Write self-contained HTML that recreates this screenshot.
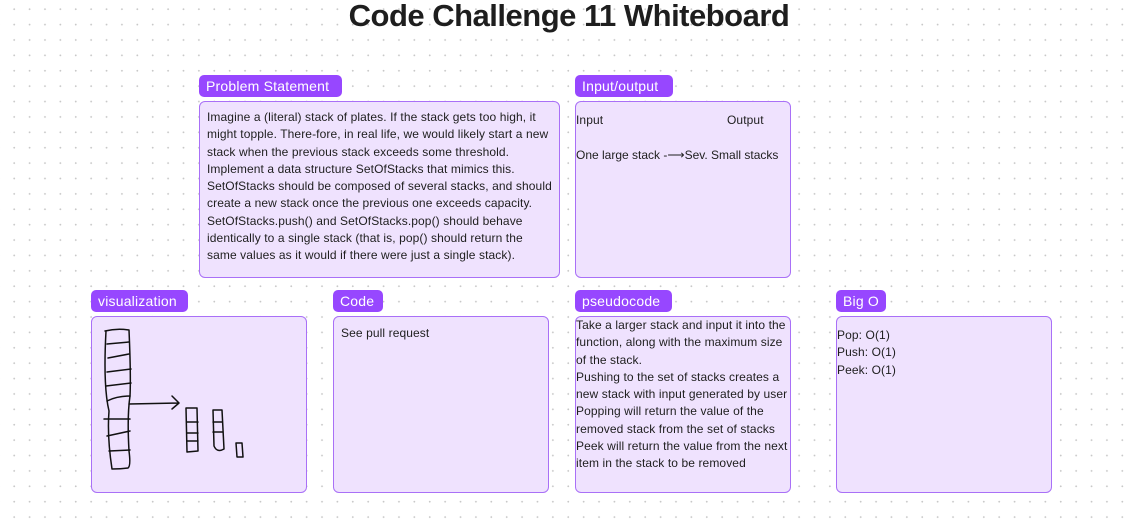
<!DOCTYPE html>
<html><head><meta charset="utf-8"><style>
body{margin:0;width:1129px;height:525px;overflow:hidden;background:#fff;font-family:"Liberation Sans",sans-serif;position:relative;
background-image:radial-gradient(circle,#c8c8c8 0.8px,transparent 1.1px);background-size:15.4px 15.4px;background-position:6.5px 1.5px;}
h1{position:absolute;left:0;width:1138px;top:-2px;margin:0;text-align:center;font-size:31px;font-weight:bold;color:#1e1e1e;letter-spacing:-0.5px}
.lab{position:absolute;height:22px;background:#9747ff;color:#fff;border-radius:5px;font-size:14px;line-height:22px;padding:0 7px;box-sizing:border-box;letter-spacing:0.2px}
.card{position:absolute;background:#efe2fe;border:1.3px solid #a970f7;border-radius:6px;box-sizing:border-box;font-size:12px;line-height:17.3px;color:#1e1e1e;letter-spacing:0.1px}
</style></head><body>
<h1>Code Challenge 11 Whiteboard</h1>

<div class="lab" style="left:199px;top:75px;width:143px">Problem Statement</div>
<div class="card" style="left:199px;top:101px;width:361px;height:177px;padding:7px 7px">Imagine a (literal) stack of plates. If the stack gets too high, it might topple. There-fore, in real life, we would likely start a new stack when the previous stack exceeds some threshold. Implement a data structure SetOfStacks that mimics this. SetOfStacks should be composed of several stacks, and should create a new stack once the previous one exceeds capacity. SetOfStacks.push() and SetOfStacks.pop() should behave identically to a single stack (that is, pop() should return the same values as it would if there were just a single stack).</div>

<div class="lab" style="left:575px;top:75px;width:98px">Input/output</div>
<div class="card" style="left:575px;top:101px;width:216px;height:177px">
<div style="position:absolute;left:0;top:10px">Input</div>
<div style="position:absolute;left:151px;top:10px">Output</div>
<div style="position:absolute;left:0;top:45px;white-space:nowrap;letter-spacing:0">One large stack -⟶Sev. Small stacks</div>
</div>

<div class="lab" style="left:91px;top:290px;width:97px">visualization</div>
<div class="card" style="left:91px;top:316px;width:216px;height:177px">
<svg width="216" height="177" style="position:absolute;left:-1px;top:-1px" fill="none" stroke="#111" stroke-width="1.5" stroke-linecap="round" stroke-linejoin="round">
<path d="M14 15 Q26 12 38 14 Q40 60 39 80 Q36 100 38 135 Q40 150 37 152 Q30 153 21 153 Q16 120 18 95 Q12 70 15 15"/>
<path d="M16 28 L38 26 M17 42 L38 38 M16 56 L40 53 M15 70 L40 67 M16 85 Q26 80 39 80 M13 103 L39 103 M16 120 L39 115 M18 135 L39 134"/>
<path d="M38 88 L88 87 M81 80 L88 87 L81 93"/>
<path d="M95 92 L106 92 L107 135 L96 136 Z M96 106 L107 106 M96 117 L107 117 M96 125 L107 125"/>
<path d="M122 94 L131 94 L133 133 Q126 137 123 130 Z M122 106 L131 106 M122 116 L132 116"/>
<path d="M145 127 L151 127 L152 141 L146 141 Z"/>
</svg></div>

<div class="lab" style="left:333px;top:290px;width:50px">Code</div>
<div class="card" style="left:333px;top:316px;width:216px;height:177px;padding:8px 7px">See pull request</div>

<div class="lab" style="left:575px;top:290px;width:97px">pseudocode</div>
<div class="card" style="left:575px;top:316px;width:216px;height:177px;padding:0">Take a larger stack and input it into the function, along with the maximum size of the stack.<br>Pushing to the set of stacks creates a new stack with input generated by user<br>Popping will return the value of the removed stack from the set of stacks<br>Peek will return the value from the next item in the stack to be removed</div>

<div class="lab" style="left:836px;top:290px;width:50px">Big O</div>
<div class="card" style="left:836px;top:316px;width:216px;height:177px;padding:10px 0 0 0">Pop: O(1)<br>Push: O(1)<br>Peek: O(1)</div>
</body></html>
